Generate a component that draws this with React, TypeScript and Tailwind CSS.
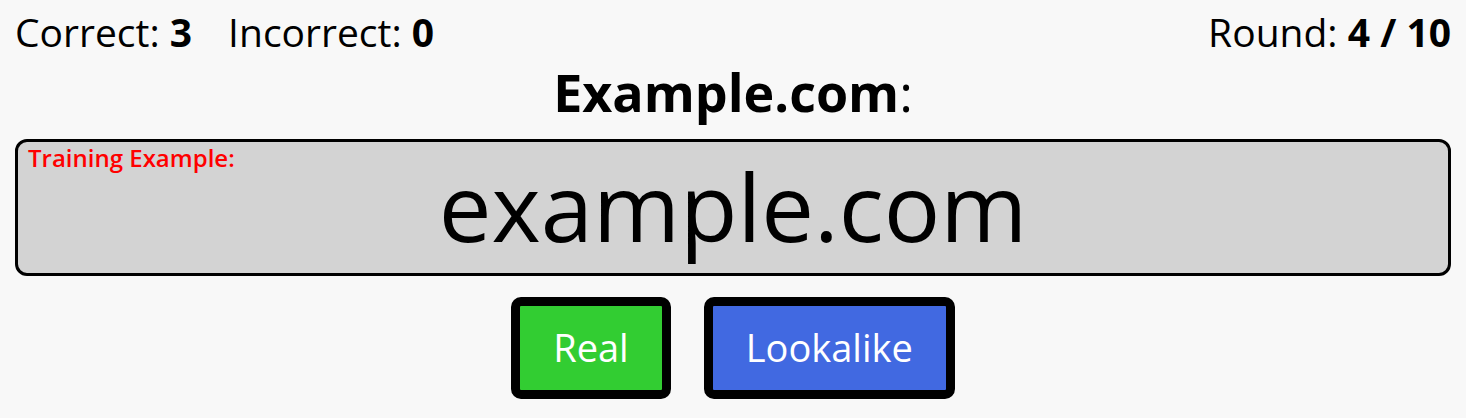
import React from 'react';

const font = { fontFamily: '"Open Sans", sans-serif' };

export default function App() {
  return (
    <div className="min-h-[418px] w-full bg-[#f8f8f8] text-black" style={font}>
      <div className="flex items-start justify-between px-[15px] pt-[5px] text-[39px] leading-[1.362]">
        <div className="flex">
          <span>
            Correct: <b className="font-bold">3</b>
          </span>
          <span className="ml-[36px]">
            Incorrect: <b className="font-bold">0</b>
          </span>
        </div>
        <span>
          Round: <b className="font-bold">4 / 10</b>
        </span>
      </div>

      <h2 className="-mt-[1px] text-center text-[52px] leading-[1.362]">
        <span className="font-bold">Example.com</span>:
      </h2>

      <div className="mx-[15px] mt-[11px]">
        <div className="relative rounded-[12px] border-[3px] border-black bg-[#d3d3d3] pb-[3px] text-center">
          <span className="absolute left-[10px] top-0 text-[24px] font-semibold leading-[1.362] text-[#ff0000]">
            Training Example:
          </span>
          <div className="text-[94px] leading-[128px]">example.com</div>
        </div>
      </div>

      <div className="mt-[21px] flex justify-center gap-[33px]">
        <button className="rounded-[10px] border-[9px] border-black bg-[#32cd32] px-[33px] py-4 text-[38px] leading-[1.362] text-white">
          Real
        </button>
        <button className="rounded-[10px] border-[9px] border-black bg-[#4169e1] px-[33px] py-4 text-[38px] leading-[1.362] text-white">
          Lookalike
        </button>
      </div>
    </div>
  );
}
